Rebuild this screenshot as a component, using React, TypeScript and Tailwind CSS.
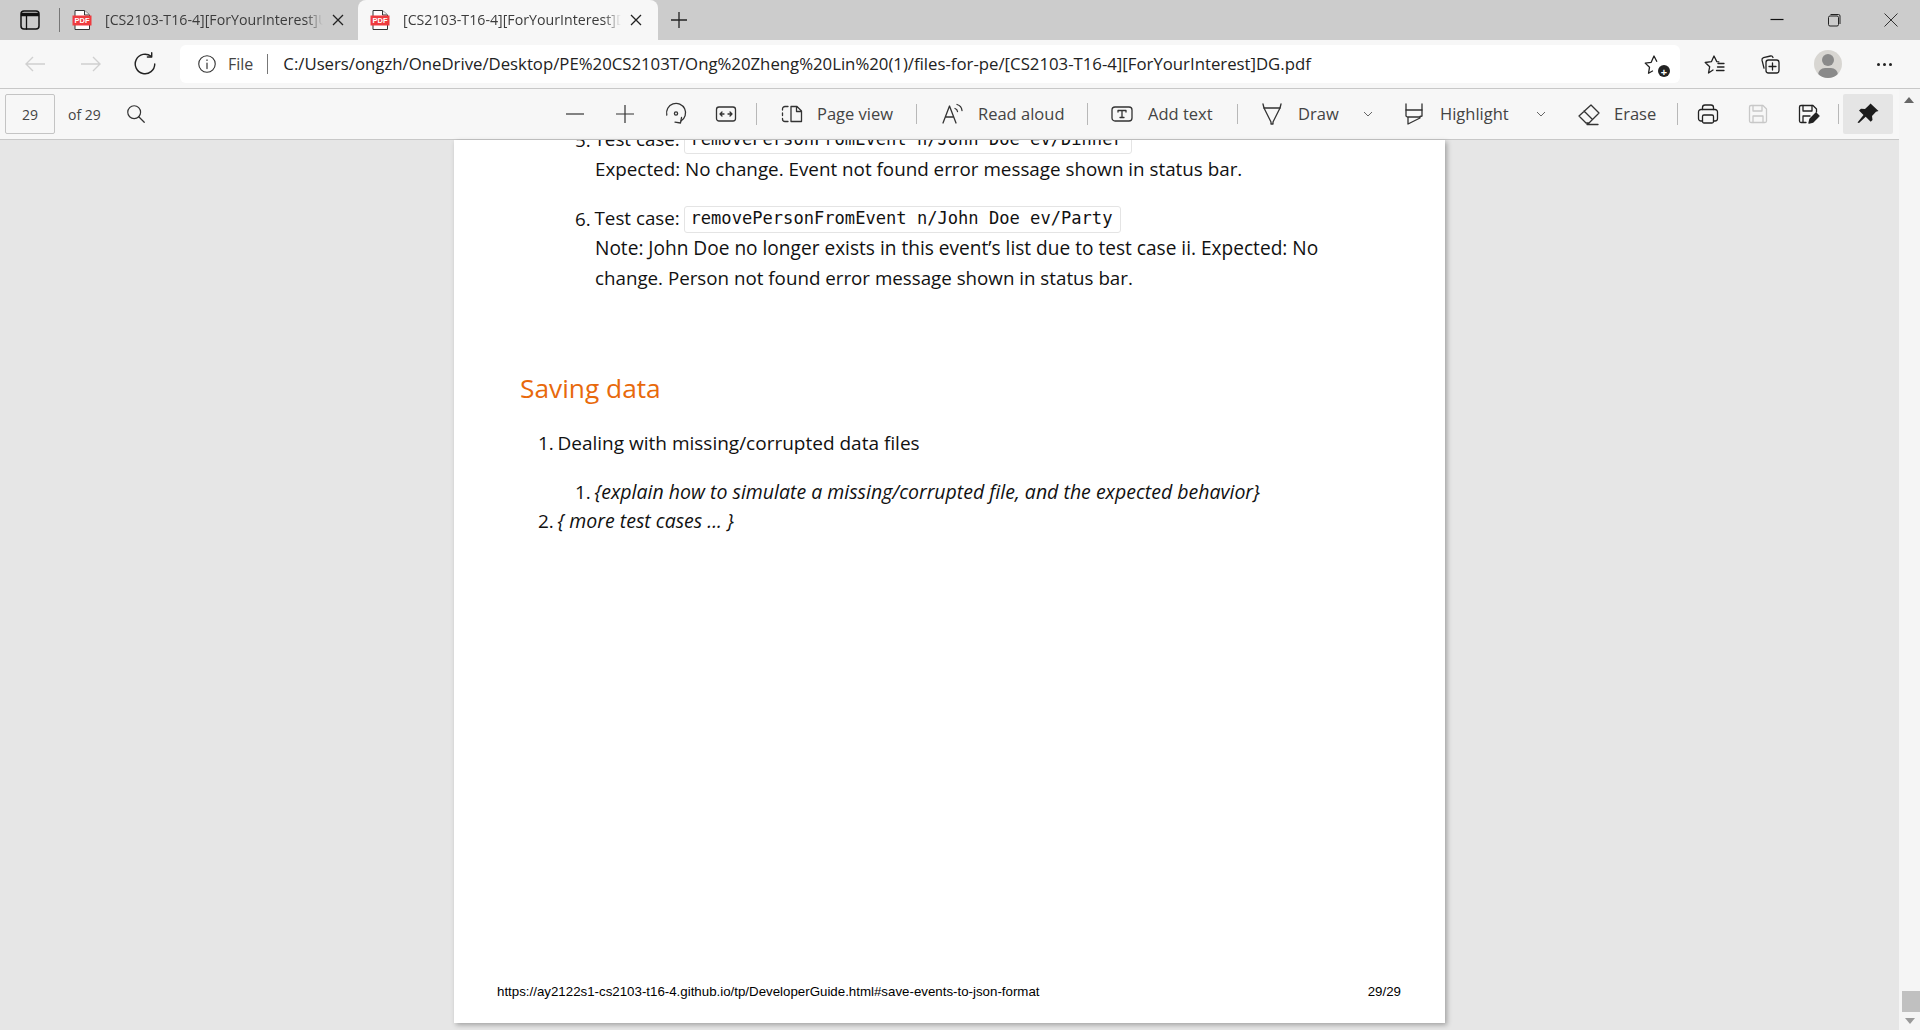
import type { ReactNode } from "react";

const Ico = ({ size = 24, children, className = "" }: { size?: number; children: ReactNode; className?: string }) => (
  <svg
    width={size}
    height={size}
    viewBox="0 0 24 24"
    fill="none"
    stroke="currentColor"
    strokeWidth={1.3}
    strokeLinecap="round"
    strokeLinejoin="round"
    className={`shrink-0 ${className}`}
  >
    {children}
  </svg>
);

const PdfIcon = () => (
  <svg width={20} height={22} viewBox="0 0 20 22" className="shrink-0">
    <path d="M3 1.500h9.500L17.500 6v14.500H3z" fill="#fff" stroke="#333" strokeWidth={1} />
    <path d="M12.500 1.500V6h5" fill="#eee" stroke="#333" strokeWidth={1} />
    <rect x={0.5} y={6.5} width={19} height={10} fill="#ee3b3f" />
    <text x={10} y={14.300} textAnchor="middle" fontSize={7.500} fontWeight={700} fill="#fff" fontFamily="Liberation Sans">
      PDF
    </text>
  </svg>
);

const Tab = ({ active, title, width }: { active?: boolean; title: string; width: string }) => (
  <div className={`flex h-10 shrink-0 items-center rounded-t-lg pl-[12px] ${width} ${active ? "bg-[#f7f7f7]" : ""}`}>
    <PdfIcon />
    <span className="ml-[13px] mb-[1px] w-[218px] overflow-hidden whitespace-nowrap text-[14.200px] text-[#3c3c3c] [mask-image:linear-gradient(90deg,#000_92%,transparent)]">
      {title}
    </span>
    <svg width={14} height={14} viewBox="0 0 14 14" className="ml-[8px] shrink-0" stroke="#222" strokeWidth={1.3}>
      <path d="M2 2l10 10M12 2L2 12" />
    </svg>
  </div>
);

const Sep = ({ ml, h = 20 }: { ml: number; h?: number }) => (
  <div className="w-px shrink-0 bg-[#b8b8b8]" style={{ marginLeft: ml, height: h }} />
);

const Label = ({ ml, w, children }: { ml: number; w: number; children: string }) => (
  <span className="shrink-0 whitespace-nowrap text-[16.500px] text-[#444]" style={{ marginLeft: ml, width: w }}>
    {children}
  </span>
);

const Chevron = ({ ml }: { ml: number }) => (
  <svg width={10} height={6} viewBox="0 0 10 6" fill="none" stroke="#666" strokeWidth={1} className="shrink-0" style={{ marginLeft: ml }}>
    <path d="M1 1l4 4 4-4" />
  </svg>
);

const Slot = ({ ml, w = 24, children }: { ml: number; w?: number; children: ReactNode }) => (
  <div className="flex shrink-0 items-center justify-center text-[#222]" style={{ marginLeft: ml, width: w }}>
    {children}
  </div>
);

const TitleBar = () => (
  <div className="flex h-10 items-center bg-[#cccccc]">
    <Slot ml={18} w={24}>
      <Ico size={24} className="text-[#111]">
        <rect x={3} y={3} width={18} height={18} rx={3} strokeWidth={1.5} />
        <path d="M3 6.500h18" strokeWidth={3.500} strokeLinecap="butt" />
        <path d="M8.500 8v13" />
      </Ico>
    </Slot>
    <div className="ml-[17px] h-[24px] w-px shrink-0 bg-[#777]" />
    <Tab width="w-[298px]" title="[CS2103-T16-4][ForYourInterest]UG.pdf" />
    <Tab width="w-[300px]" active title="[CS2103-T16-4][ForYourInterest]DG.pdf" />
    <svg width={20} height={20} viewBox="0 0 20 20" stroke="#222" strokeWidth={1.3} className="ml-[11px] shrink-0">
      <path d="M10 2v16M2 10h16" />
    </svg>
    <div className="ml-auto flex items-center text-[#222]">
      <svg width={16} height={16} viewBox="0 0 16 16" stroke="#111" strokeWidth={1.2}><path d="M1.500 7.500h13" /></svg>
      <svg width={16} height={16} viewBox="0 0 16 16" fill="none" stroke="#222" strokeWidth={1} className="ml-[41px]">
        <rect x={2.500} y={4} width={10} height={10} rx={1.500} />
        <path d="M4.500 2.500h8a1.500 1.500 0 0 1 1.500 1.500v8" />
      </svg>
      <svg width={16} height={16} viewBox="0 0 16 16" stroke="#333" strokeWidth={1} className="ml-[41px] mr-[21px]">
        <path d="M1.500 1.500l13 13M14.500 1.500l-13 13" />
      </svg>
    </div>
  </div>
);

const AddressBar = () => (
  <div className="flex h-[49px] items-center border-b border-[#c8c8c8] bg-[#f7f7f7]">
    <Slot ml={23} w={24}>
      <svg width={22} height={18} viewBox="0 0 22 18" fill="none" stroke="#d0d0d0" strokeWidth={1.400}><path d="M21 9H2M9 2L2 9l7 7" /></svg>
    </Slot>
    <Slot ml={32} w={24}>
      <svg width={22} height={18} viewBox="0 0 22 18" fill="none" stroke="#d0d0d0" strokeWidth={1.400}><path d="M1 9h19M13 2l7 7-7 7" /></svg>
    </Slot>
    <Slot ml={30} w={24}>
      <Ico size={26} className="text-[#222]">
        <path d="M21 12a9 9 0 1 1-3.300-7" />
        <path d="M18.200 1.500v4h-4" />
      </Ico>
    </Slot>
    <div className="ml-[23px] flex h-[38px] w-[1500px] shrink-0 items-center rounded-md bg-white">
      <Ico size={22} className="ml-[16px] text-[#333]">
        <circle cx={12} cy={12} r={9} strokeWidth={1.200} />
        <path d="M12 11v6M12 7.600v.6" strokeWidth={1.300} />
      </Ico>
      <span className="ml-[10px] text-[16px] text-[#444]">File</span>
      <div className="ml-[14px] h-[20px] w-px bg-[#777]" />
      <span className="ml-[15px] whitespace-nowrap text-[16.750px] text-[#222]">
        C:/Users/ongzh/OneDrive/Desktop/PE%20CS2103T/Ong%20Zheng%20Lin%20(1)/files-for-pe/[CS2103-T16-4][ForYourInterest]DG.pdf
      </span>
      <div className="relative ml-auto mr-[13px] text-[#222]">
        <Ico size={24}>
          <path d="M9.500 19l-4 2.300 1-6-4.300-4.200 6-.8L11 4l2.700 5.300" />
        </Ico>
        <div className="absolute bottom-[-1px] right-[-3px] flex h-[12px] w-[12px] items-center justify-center rounded-full bg-[#222] text-[11px] font-bold leading-none text-white">+</div>
      </div>
    </div>
    <Slot ml={23} w={24}>
      <Ico size={24}>
        <path d="M10 18l-4.500 3 1.200-6.300-4.500-4.200 6.200-.8L11 4l2.800 5.600 2 .3" />
        <path d="M15 11.500h6M14.500 15h6.500M13.500 18.500h7.500" />
      </Ico>
    </Slot>
    <Slot ml={31} w={24}>
      <Ico size={24}>
        <rect x={8} y={8} width={13} height={13} rx={2.500} />
        <path d="M14.500 11v7M11 14.500h7" />
        <path d="M15 5.500c-.5-1.300-1.300-1.800-2.500-1.500L5.500 5.600C4.300 6 3.800 7 4 8.200l2 8" />
      </Ico>
    </Slot>
    <div className="relative ml-[32px] h-[28px] w-[28px] shrink-0 overflow-hidden rounded-full bg-[#d8d6d2]">
      <div className="mx-auto mt-[4px] h-[12px] w-[12px] rounded-full bg-[#8a8a8a]" />
      <div className="mx-auto mt-[2px] h-[14px] w-[20px] rounded-full bg-[#8a8a8a]" />
    </div>
    <div className="ml-[35px] flex gap-[3px]">
      <div className="h-[3px] w-[3px] rounded-full bg-[#222]" />
      <div className="h-[3px] w-[3px] rounded-full bg-[#222]" />
      <div className="h-[3px] w-[3px] rounded-full bg-[#222]" />
    </div>
  </div>
);

const PdfToolbar = () => (
  <div className="flex h-[51px] shrink-0 items-center border-b border-[#c8c8c8] bg-[#f7f7f7]">
    <div className="ml-[5px] flex h-[40px] w-[50px] shrink-0 items-center justify-center rounded-[2px] border border-[#c4c4c4] text-[14px] text-[#444]">
      29
    </div>
    <span className="ml-[13px] w-[33px] shrink-0 whitespace-nowrap text-[14px] text-[#444]">of 29</span>
    <Slot ml={24} w={22}>
      <Ico size={22} className="text-[#333]">
        <circle cx={10} cy={10} r={7} />
        <path d="M15 15l6 6" />
      </Ico>
    </Slot>
    <Slot ml={418} w={20}>
      <svg width={18} height={2} viewBox="0 0 18 2" stroke="#333" strokeWidth={1.200}><path d="M0 1h18" /></svg>
    </Slot>
    <Slot ml={30} w={20}>
      <svg width={18} height={18} viewBox="0 0 18 18" stroke="#333" strokeWidth={1.200}><path d="M0 9h18M9 0v18" /></svg>
    </Slot>
    <Slot ml={30} w={22}>
      <Ico size={24} className="text-[#333]">
        <path d="M2.800 13A9.500 9.500 0 1 1 17 19" />
        <circle cx={12} cy={11.500} r={1.600} />
        <path d="M17.500 15.500L16.500 21l-5.500-.8" />
      </Ico>
    </Slot>
    <Slot ml={29} w={20}>
      <Ico size={24} className="text-[#333]">
        <rect x={2.500} y={5} width={19} height={14} rx={2.500} />
        <path d="M6 12h4M14 12h4M8 10l-2 2 2 2M16 10l2 2-2 2" />
      </Ico>
    </Slot>
    <Sep ml={20} h={22} />
    <Slot ml={24} w={22}>
      <Ico size={24} className="text-[#333]">
        <path d="M11 4.500h6l4.500 4.500v10.500H11zM16.500 4.500V9.500h5" />
        <path d="M8 4.500H5a2.500 2.500 0 0 0-2.500 2.500v1M2.500 11v2.500M2.500 16.500v.5A2.500 2.500 0 0 0 5 19.500h3" />
      </Ico>
    </Slot>
    <Label ml={14} w={77}>Page view</Label>
    <Sep ml={22} />
    <Slot ml={24} w={24}>
      <Ico size={24} className="text-[#333]">
        <path d="M2 21L8.500 4 15 21M4.500 15h8" />
        <path d="M14 6.500a3.500 3.500 0 0 1 2.500 3M16 2.500a7 7 0 0 1 5 6" />
      </Ico>
    </Slot>
    <Label ml={13} w={86}>Read aloud</Label>
    <Sep ml={23} h={22} />
    <Slot ml={23} w={22}>
      <Ico size={24} className="text-[#333]">
        <rect x={2} y={5} width={20} height={14} rx={3} />
        <path d="M8 8.500h8M8 8.500v1.500M16 8.500v1.500M12 8.500v7M10 15.500h4" />
      </Ico>
    </Slot>
    <Label ml={15} w={66}>Add text</Label>
    <Sep ml={23} />
    <Slot ml={23} w={22}>
      <Ico size={24} className="text-[#333]">
        <path d="M3 2l1 4h16l1-4" />
        <path d="M4 6l7 14v2h2v-2l7-14" />
      </Ico>
    </Slot>
    <Label ml={15} w={40}>Draw</Label>
    <Chevron ml={25} />
    <Slot ml={30} w={22}>
      <Ico size={24} className="text-[#333]">
        <path d="M4 2v6h16V2" />
        <path d="M4 8v6l2 1.500V22l12-6v-1.500l2-.5V8M6 15h12" />
      </Ico>
    </Slot>
    <Label ml={15} w={71}>Highlight</Label>
    <Chevron ml={25} />
    <Slot ml={31} w={24}>
      <Ico size={24} className="text-[#333]">
        <path d="M14 3l8 8-10 10H9l-7-7zM7 9l8 8M10 22.500h11" />
      </Ico>
    </Slot>
    <Label ml={13} w={40}>Erase</Label>
    <Sep ml={23} h={22} />
    <Slot ml={19} w={22}>
      <Ico size={24} className="text-[#222]">
        <path d="M6.500 7.500V5.500a2.500 2.500 0 0 1 2.500-2.500h6a2.500 2.500 0 0 1 2.500 2.500v2" />
        <path d="M6.500 19H5A2.500 2.500 0 0 1 2.500 16.500v-6.500A2.500 2.500 0 0 1 5 7.500h14a2.500 2.500 0 0 1 2.500 2.500v6.500A2.500 2.500 0 0 1 19 19h-1.500" />
        <rect x={6.500} y={13} width={11} height={8} rx={1.500} />
      </Ico>
    </Slot>
    <Slot ml={28} w={22}>
      <Ico size={24} className="text-[#c8c8c8]">
        <path d="M3.500 5A1.500 1.500 0 0 1 5 3.500h12L20.500 7v12a1.500 1.500 0 0 1-1.500 1.500H5A1.500 1.500 0 0 1 3.500 19z" />
        <path d="M7 3.500V9h9V3.500M7 20.500V14h10v6.500" />
      </Ico>
    </Slot>
    <Slot ml={28} w={22}>
      <Ico size={24} className="text-[#222]">
        <path d="M10 20.500H5A1.500 1.500 0 0 1 3.500 19V5A1.500 1.500 0 0 1 5 3.500h12L20.500 7v3" />
        <path d="M7 3.500V9h9V3.500M7 20V14h7" />
        <path d="M13 21l1-4 6-6 3 3-6 6z" fill="currentColor" />
      </Ico>
    </Slot>
    <Sep ml={19} />
    <div className="ml-[4px] flex h-[40px] w-[50px] shrink-0 items-center justify-center rounded-[2px] bg-[#e5e5e5]">
      <svg width={24} height={24} viewBox="0 0 24 24" fill="#1c1c1c">
        <path d="M14.500 1.500l8 7.500-2.500.8-4 4.200.5 4-1.800 1.800-5-5L3 21l-1.500-.5L7.500 13 3 8.500l2-1.800 4 .3 4.200-4z" />
      </svg>
    </div>
  </div>
);

const CodeChip = ({ children, clipped }: { children: string; clipped?: boolean }) => (
  <code
    className={`ml-[4px] inline-flex h-[27px] items-center rounded-[3px] border border-[#e4e4e4] pl-[6px] font-["DejaVu_Sans_Mono","Liberation_Mono",monospace] text-[17.100px] text-[#111] ${clipped ? "w-[448px]" : "w-[437px]"}`}
  >
    {children}
  </code>
);

const ListRow = ({ n, ml, className = "", children }: { n: string; ml: number; className?: string; children: ReactNode }) => (
  <div className={`flex h-[30px] items-center whitespace-nowrap ${className}`} style={{ marginLeft: ml }}>
    <span className="w-[19.500px] shrink-0">{n}</span>
    {children}
  </div>
);

const PdfPage = () => (
  <div className="ml-[454px] h-[883px] w-[991px] overflow-hidden bg-white shadow-[2px_2px_5px_rgba(0,0,0,0.3)]">
    <div className="relative flex h-full flex-col font-['Open_Sans',sans-serif] text-[19px] text-[#111]">
      <div className="mt-[-15px] pl-[121px]">
        <ListRow n="5." ml={0} className="text-[18.800px]">
          <span className="mb-[2px] w-[85px] shrink-0">Test case:</span>
          <CodeChip clipped>removePersonFromEvent n/John Doe ev/Dinner</CodeChip>
        </ListRow>
        <div className="flex h-[30px] items-center pb-[2px] pl-[20px] text-[18.820px]">Expected: No change. Event not found error message shown in status bar.</div>
        <ListRow n="6." ml={0} className="mt-[19px] text-[18.800px]">
          <span className="mb-[2px] w-[85px] shrink-0">Test case:</span>
          <CodeChip>removePersonFromEvent n/John Doe ev/Party</CodeChip>
        </ListRow>
        <div className="flex h-[30px] items-center pb-[2px] pl-[20px] text-[19.100px]">Note: John Doe no longer exists in this event’s list due to test case ii. Expected: No</div>
        <div className="flex h-[30px] items-center pb-[2px] pl-[20px] text-[18.750px]">change. Person not found error message shown in status bar.</div>
      </div>
      <h2 className="ml-[66px] mt-[74px] text-[26.300px] leading-[40px] text-[#e8690b]">Saving data</h2>
      <div className="mt-[20px] pl-[84px]">
        <ListRow n="1." ml={0}>
          <span>Dealing with missing/corrupted data files</span>
        </ListRow>
        <ListRow n="1." ml={37} className="mt-[19px]">
          <span className="text-[19.500px] italic">{"{explain how to simulate a missing/corrupted file, and the expected behavior}"}</span>
        </ListRow>
        <ListRow n="2." ml={0} className="mt-[-1px]">
          <span className="text-[19.500px] italic">{"{ more test cases ... }"}</span>
        </ListRow>
      </div>
      <div className="mt-auto mb-[21px] flex justify-between pl-[43px] pr-[44px] font-['Liberation_Sans',sans-serif] text-[13.300px] text-black">
        <span>https://ay2122s1-cs2103-t16-4.github.io/tp/DeveloperGuide.html#save-events-to-json-format</span>
        <span>29/29</span>
      </div>
    </div>
  </div>
);

const ScrollBar = () => (
  <div className="flex w-[21px] shrink-0 flex-col bg-[#f5f5f5]">
    <svg width={10} height={6} viewBox="0 0 10 6" fill="#666" className="ml-[5px] mt-[8px]"><path d="M5 0l5 6H0z" /></svg>
    <div className="mt-auto ml-[3px] h-[21px] w-[18px] bg-[#c0c0c0]" />
    <svg width={10} height={6} viewBox="0 0 10 6" fill="#9a9a9a" className="my-[6px] ml-[6px]"><path d="M5 6L0 0h10z" /></svg>
  </div>
);

export default function App() {
  return (
    <div className="flex h-[1030px] w-[1920px] flex-col overflow-hidden bg-[#e6e6e6] font-['Open_Sans',sans-serif]">
      <TitleBar />
      <AddressBar />
      <div className="flex min-h-0 flex-1">
        <div className="flex min-w-0 flex-1 flex-col">
          <PdfToolbar />
          <div className="min-h-0 flex-1">
            <PdfPage />
          </div>
        </div>
        <ScrollBar />
      </div>
    </div>
  );
}
